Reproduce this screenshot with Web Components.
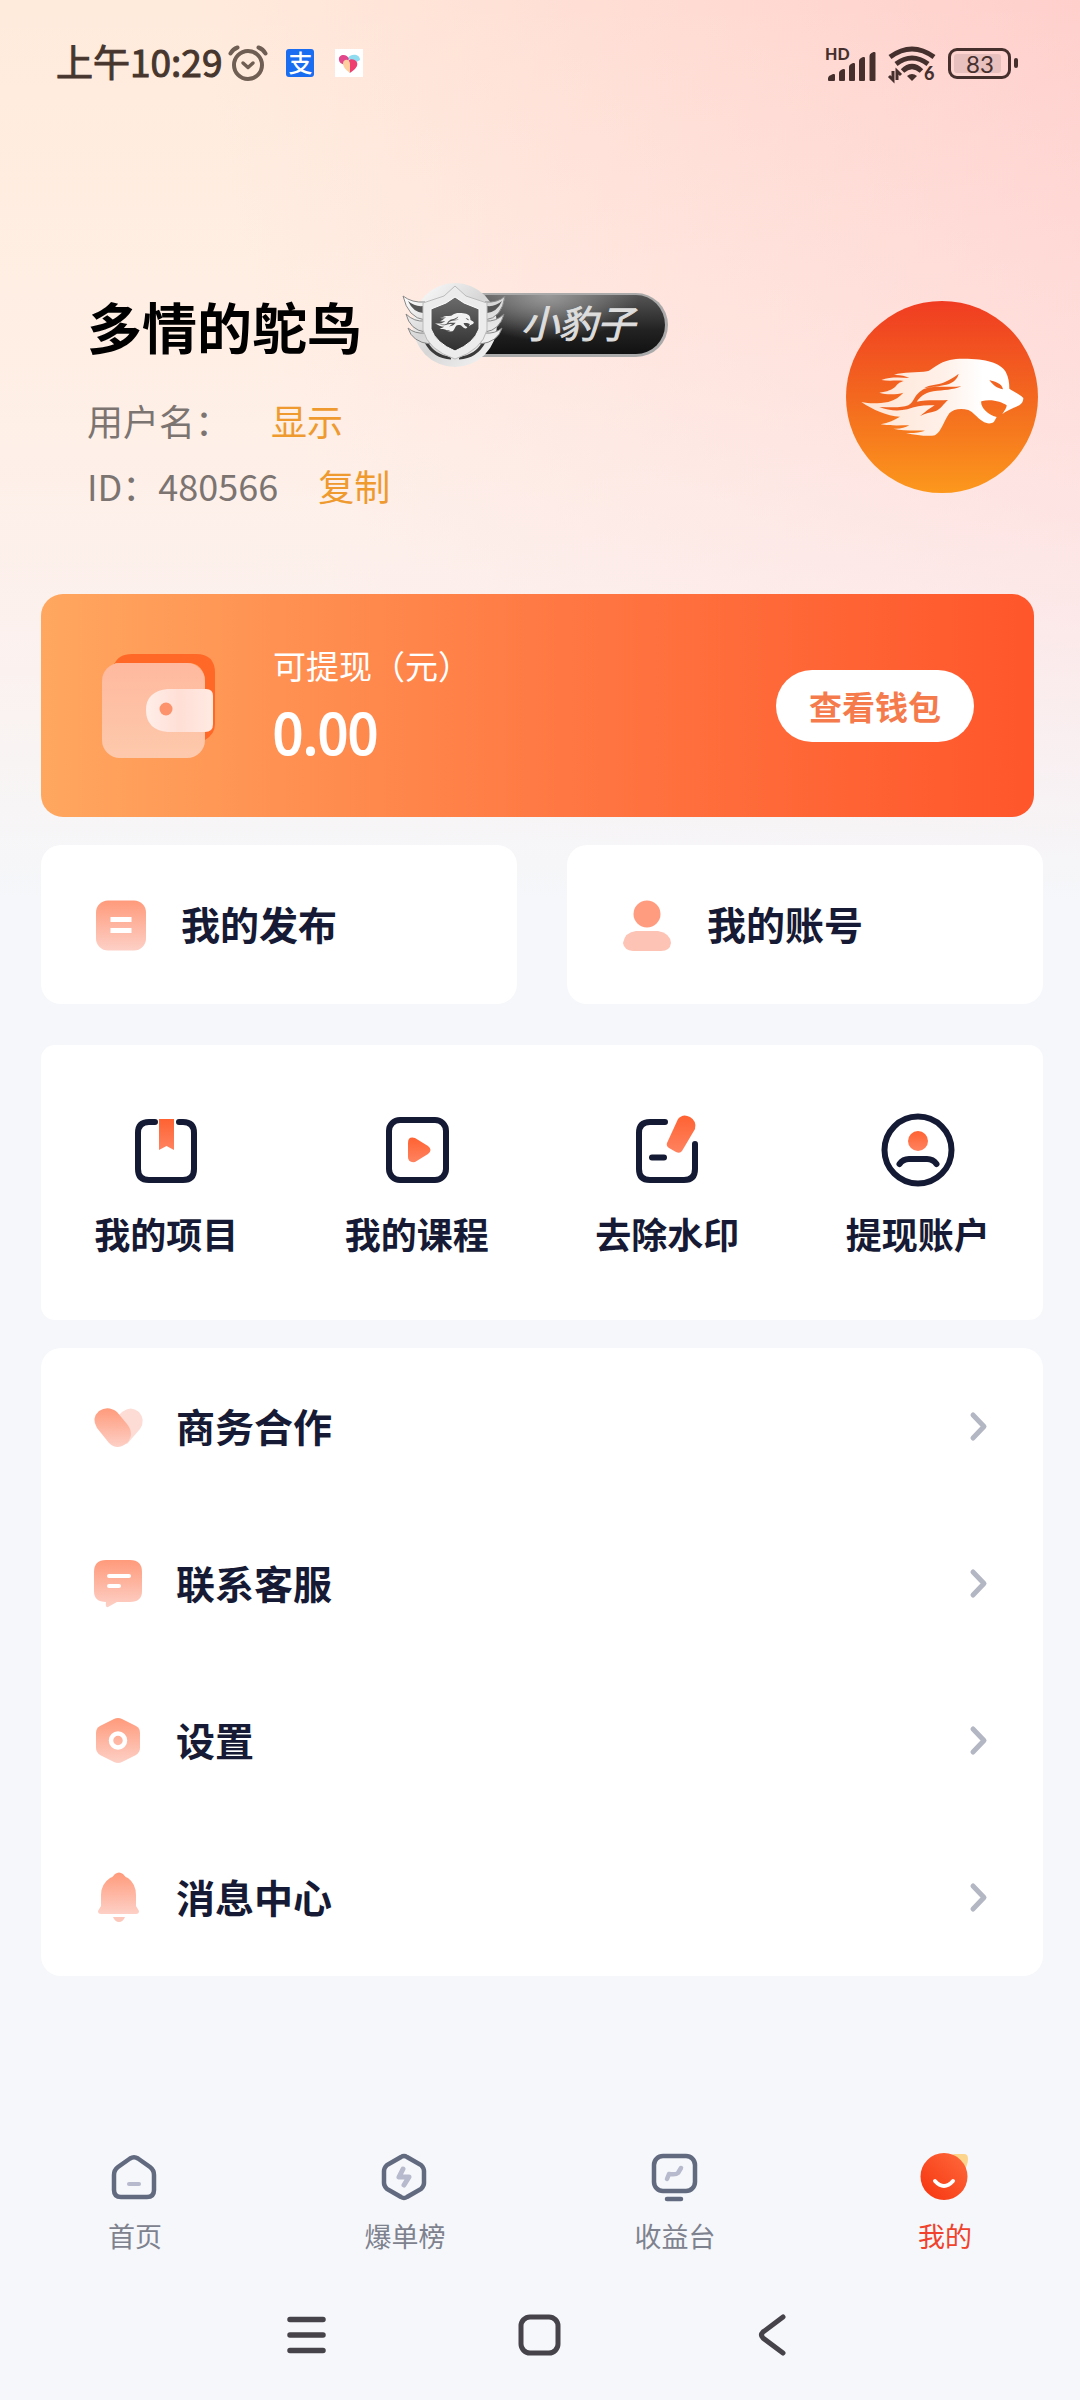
<!DOCTYPE html>
<html lang="zh-CN">
<head>
<meta charset="utf-8">
<meta name="viewport" content="width=device-width, initial-scale=1">
<title>我的</title>
<style>
  body {
    margin: 0;
    background: #f4f7fb;
    font-family: "Noto Sans CJK SC", "Noto Sans", sans-serif;
    color: #161a34;
  }
</style>
</head>
<body>
<profile-page></profile-page>

<script>
const LION = `
  <path d="M325 273C350 260 365 236 430 236C500 236 540 248 557 275C566 292 568 308 568 326C585 338 600 342 610 354C610 364 606 370 598 376C580 384 560 392 547 402C552 395 560 384 560 376C545 366 515 356 484 364C480 378 500 405 530 411L522 425C515 432 500 432 488 424C470 412 460 396 445 390C425 384 400 386 388 400C370 425 365 455 345 466C325 470 290 466 258 459C280 460 300 458 315 452C290 450 250 454 220 446C240 447 255 444 268 436C240 436 210 438 182 433C205 428 225 420 240 410C200 408 160 390 124 366C150 372 180 370 205 366C225 360 240 350 250 338C230 344 200 345 178 338C200 336 220 328 228 318C236 308 242 306 252 303C230 300 205 304 184 300C210 290 240 292 268 294C255 288 240 284 222 285C250 274 290 280 325 273Z" fill="var(--lion, url(#l))"/>
  <path d="M312 325C330 312 350 318 375 306C392 298 405 290 416 281C412 300 395 312 370 316C350 320 330 322 312 325ZM178 381C215 382 245 384 265 376C285 365 280 345 310 328C340 314 380 324 424 319C400 330 370 330 340 334C310 340 300 352 290 365C320 358 350 362 384 360C370 372 362 388 345 394C330 398 318 400 300 408C318 394 330 384 344 376C310 374 290 378 262 388C235 394 205 392 178 381Z" fill="var(--slit, #f16320)"/>
  <path d="M508 300C525 306 545 308 549 328C530 324 520 316 508 300Z" fill="var(--slit, #f16320)"/>`;

const FADE = `<defs><linearGradient id="f" x1="0" y1="0" x2="0" y2="1"><stop offset="0" stop-color="#ff9a7b"/><stop offset="1" stop-color="#fdd0c6"/></linearGradient>
  <linearGradient id="o" x1="0" y1="0" x2="0" y2="1"><stop offset="0" stop-color="#ff6232"/><stop offset="1" stop-color="#ff8360"/></linearGradient></defs>`;

// name -> [viewBox, markup]; every box is drawn at its natural size
const ICONS = {
  alarm: ['0 0 40 36', `<g fill="none" stroke="#6f5e53" stroke-linecap="round"><circle cx="20" cy="20" r="14" stroke-width="4"/><path d="M15 18l5 4.500 5-4.500" stroke-width="3.500" stroke-linejoin="round"/><path d="M2.500 8.500Q5 4 9.500 2.500M37.500 8.500Q35 4 30.500 2.500" stroke-width="4"/></g>`],
  love: ['0 0 28 28', `<rect width="28" height="28" fill="#fff"/><path d="M13 9C16 4 25 5 25 11L18 15Z" fill="#8fdcf0"/><path d="M4 11C3 5 12 4 14 10L10 16C6 15 4 13 4 11Z" fill="#e2478c"/><path d="M13 12C17 8 24 12 22 17C20 21 17 22 15 24L10 16Z" fill="#ee3f70"/><path d="M8 14C9 9 15 10 15 15V24C11 21 8 18 8 14Z" fill="#ffcf9f"/>`],
  signal: ['0 0 52 36', `<g fill="#46302e"><text x="-1" y="15" font-family="Lato, sans-serif" font-weight="900" font-size="16">HD</text><path d="M2 33l1-2 4-2q2-.5 2 1v5q0 1-1 1H3q-1 0-1-1zM13 28q0-2 2-3l2-1q2-.5 2 1v10q0 1-1 1h-4q-1 0-1-1zM23 22q0-2 2-3l2-1q2-.5 2 1v16q0 1-1 1h-4q-1 0-1-1zM33 16q0-2 2-3l2-1q2-.5 2 1v22q0 1-1 1h-4q-1 0-1-1zM43.500 11q0-2 2-3l2-1q2-.5 2 1v27q0 1-1 1h-4q-1 0-1-1z"/></g>`],
  wifi: ['0 0 50 36', `<g fill="none" stroke="#46302e" stroke-width="5"><path d="M2 12Q24-4 46 12M8 19Q24 7 40 19M14.500 26Q24 17 33.500 26"/></g><path d="M19 31q5-4 10 0l-5 5z" fill="#46302e"/><path d="M5 26v9l-4-4M9 35v-9l4 4" fill="none" stroke="#46302e" stroke-width="3"/><text x="36" y="35" fill="#46302e" font-family="Lato, sans-serif" font-weight="900" font-size="18">6</text>`],
  lion: ['78 63 576 576', `<defs><linearGradient id="a" x1="0" y1="0" x2="0" y2="1"><stop offset="0" stop-color="#f03c22"/><stop offset=".5" stop-color="#f3681f"/><stop offset="1" stop-color="#fc981c"/></linearGradient><linearGradient id="l"><stop offset="0" stop-color="#ffe4d4"/><stop offset=".5" stop-color="#fff0e8"/><stop offset=".75" stop-color="#fff"/></linearGradient></defs><circle cx="366" cy="351" r="288" fill="url(#a)"/>${LION}`],
  shield: ['402 283 104 85', `<defs><linearGradient id="s" x1="0" y1="0" x2="1" y2="1"><stop offset="0" stop-color="#fff"/><stop offset=".5" stop-color="#d6d6d6"/><stop offset="1" stop-color="#f8f8f8"/></linearGradient><linearGradient id="d" x1="0" y1="0" x2="0" y2="1"><stop offset="0" stop-color="#6b6b6b"/><stop offset="1" stop-color="#2f2f2f"/></linearGradient></defs>
    <circle cx="455" cy="325" r="42" fill="url(#s)"/>
    <path d="M426 342Q434 357 451 358M484 342Q476 357 459 358" fill="none" stroke="#3a3a3a" stroke-width="3"/>
    <g fill="url(#s)" stroke="#888" stroke-width="1"><path d="M403 296Q412 303 425 302V320Q408 318 403 296ZM406 314Q414 322 425 321V332Q410 330 406 314ZM408 328Q415 334 425 333L430 344Q412 342 408 328ZM505 296Q498 303 485 302V320Q502 318 505 296ZM504 314Q496 322 485 321V332Q500 330 504 314ZM502 328Q495 334 485 333L480 344Q498 342 502 328Z"/></g>
    <path d="M408 301Q415 307 423 306V313Q413 312 408 301ZM502 301Q495 307 487 306V313Q497 312 502 301Z" fill="#555"/>
    <path d="M455 286L466 296L487 303V330Q482 350 455 359Q428 350 423 330V303L444 296Z" fill="#ececec" stroke="#bbb" stroke-width="1"/>
    <path d="M455 297L464 303L479 309V329Q474 343 455 351Q436 343 431 329V309L446 303Z" fill="url(#d)" stroke="#fff" stroke-width="1"/>
    <g style="--lion:#f2f2f2;--slit:#555" transform="translate(425 294) scale(.08)">${LION}</g>`],
  wallet: ['0 0 114 104', `<defs><linearGradient id="w" x1="0" y1="0" x2="0" y2="1"><stop offset="0" stop-color="#ffb99e"/><stop offset="1" stop-color="#fdc9ac"/></linearGradient><linearGradient id="k"><stop offset="0" stop-color="#ffeee8"/><stop offset=".5" stop-color="#ffdfd6"/><stop offset="1" stop-color="#ffeae2"/></linearGradient></defs><path d="M12 11Q16 0 30 0H94Q113 0 113 19V70Q113 80 103 86V24Q100 10 88 9H12Z" fill="#ff6827"/><rect y="9" width="103" height="95" rx="18" fill="url(#w)"/><path d="M66 35H104Q111 35 111 42V70Q111 78 103 78H66Q44 76 44 56Q44 37 66 35Z" fill="url(#k)"/><circle cx="64" cy="55" r="6.500" fill="#fd936c"/>`],
  publish: ['0 0 52 52', `${FADE}<rect x="1" y="1.500" width="50" height="50" rx="12" fill="url(#f)"/><path d="M18 20.500H34M18 31.500H34" stroke="#fff" stroke-width="5" stroke-linecap="square" stroke-linejoin="round"/>`],
  account: ['0 0 52 52', `${FADE}<circle cx="26" cy="15" r="13.500" fill="#ff9c80"/><path d="M15 32H37Q49 34 50 44Q49 52 40 52H12Q3 51 2 44Q4 33 15 32Z" fill="#fdc3b5"/>`],
  project: ['0 0 74 74', `${FADE}<path d="M26 9H20Q9 9 9 20V56Q9 67 20 67H54Q65 67 65 56V20Q65 9 54 9H50" fill="none" stroke="#151a34" stroke-width="6" stroke-linecap="round"/><path d="M30 6H45V37L37.500 33L30 37Z" fill="url(#o)"/>`],
  course: ['0 0 74 74', `${FADE}<rect x="9" y="7" width="57" height="60" rx="11" fill="none" stroke="#151a34" stroke-width="6"/><path d="M28 30Q28 23 35 25L48 33Q53 37 48 41L35 49Q28 50 28 44Z" fill="url(#o)"/>`],
  watermark: ['0 0 74 74', `${FADE}<path d="M35 9H20Q9 9 9 20V56Q9 67 20 67H54Q65 67 65 56V31M22 44.500H34" fill="none" stroke="#151a34" stroke-width="6" stroke-linecap="round"/><path d="M48 6Q53 0 60 4Q67 8 65 16L52 38Q50 41 46 39L39 35Q36 33 37 30Z" fill="url(#o)"/>`],
  payee: ['0 0 74 74', `${FADE}<circle cx="37" cy="37" r="33.500" fill="none" stroke="#151a34" stroke-width="6"/><circle cx="37" cy="28" r="10" fill="url(#o)"/><path d="M18.500 51Q22 46 28 46H46Q52 46 55.500 51" fill="none" stroke="#151a34" stroke-width="6" stroke-linecap="round"/>`],
  heart: ['0 0 52 52', `${FADE}<path d="M14 26L29 11Q38 4 46 11Q53 19 47 28L34 43Z" fill="#fddcd5"/><path d="M4 27Q-2 17 6 10Q15 4 24 11L34 23Q42 33 34 42Q24 50 16 42Z" fill="url(#f)"/>`],
  chat: ['0 0 52 52', `${FADE}<path d="M13 2H37Q49 2 49 14V33Q49 44 37 44H24L15 49Q12 50 13 44Q1 44 1 33V14Q1 2 13 2Z" fill="url(#f)"/><path d="M16 18H36M16 28H26" stroke="#fff" stroke-width="4" stroke-linecap="round"/>`],
  gear: ['0 0 52 52', `${FADE}<path d="M21 4Q25 2 29 4L43 11Q47 13 47 18V33Q47 37 43 40L29 47Q25 49 21 47L7 40Q3 37 3 33V18Q3 13 7 11Z" fill="url(#f)"/><circle cx="25" cy="25.500" r="7" fill="none" stroke="#fff" stroke-width="4.500"/>`],
  bell: ['0 0 52 52', `${FADE}<path d="M22 2Q26-1 30 2Q32 5 35 6Q43 12 43 23V34L46 39Q46 42 43 42H8Q5 42 5 39L8 34V23Q8 12 17 6Q20 5 22 2Z" fill="url(#f)"/><path d="M20 45H32Q30 50 26 50Q22 50 20 45Z" fill="#fdc8bc"/>`],
  chevron: ['0 0 20 32', `<path d="M4 4L15 15.500L4 27" fill="none" stroke="#b3b7c3" stroke-width="5" stroke-linecap="round" stroke-linejoin="round"/>`],
  home: ['0 0 48 48', `<path d="M19 5.500Q23 3 27 5.500L39 14Q43 17 43 22V37Q43 44 36 44H10Q3 44 3 37V22Q3 17 7 14Z" fill="none" stroke="#626a80" stroke-width="4.500"/><path d="M18 31H28" stroke="#b7b9cc" stroke-width="4" stroke-linecap="round"/>`],
  hot: ['0 0 48 48', `<path d="M20 4Q23 2 26 4L40 12Q43 15 43 18V30Q43 33 40 36L26 44Q23 46 20 44L6 36Q3 33 3 30V18Q3 15 6 12Z" fill="none" stroke="#626a80" stroke-width="4.500"/><path d="M22 16L18 24H28L23 32" fill="none" stroke="#b7b9cc" stroke-width="5" stroke-linecap="round" stroke-linejoin="round"/>`],
  income: ['0 0 48 48', `<rect x="3" y="3" width="41" height="35" rx="9" fill="none" stroke="#626a80" stroke-width="4.500"/><path d="M16 26L18 21Q25 22 27 20L30 15" fill="none" stroke="#b7b9cc" stroke-width="4.500" stroke-linecap="round" stroke-linejoin="round"/><path d="M16 46H30" stroke="#626a80" stroke-width="4.500" stroke-linecap="round"/>`],
  mine: ['0 0 48 48', `<defs><linearGradient id="m" x1="1" y1="0" x2="0" y2="1"><stop offset="0" stop-color="#ff6a3d"/><stop offset="1" stop-color="#f6330e"/></linearGradient></defs><path d="M32 1H43Q47 1 47 6Q47 12 42 20Z" fill="#fcd48c"/><circle cx="23" cy="23.500" r="23.500" fill="url(#m)"/><path d="M14 28Q23 38 32 28" fill="none" stroke="#fff" stroke-width="4" stroke-linecap="round"/>`],
  menu: ['0 0 44 44', `<path d="M5 6.500H38M5 22H38M5 37.500H38" stroke="#46444a" stroke-width="5.500" stroke-linecap="round"/>`],
  square: ['0 0 44 44', `<rect x="3" y="4" width="37" height="36" rx="9" fill="none" stroke="#46444a" stroke-width="5"/>`],
  back: ['0 0 44 44', `<path d="M32 4L12 19Q9 22 12 25L32 40" fill="none" stroke="#46444a" stroke-width="5" stroke-linecap="round"/>`],
};

function define(name, html) {
  const template = document.createElement('template');
  template.innerHTML = html;
  customElements.define(name, class extends HTMLElement {
    constructor() {
      super();
      this.attachShadow({ mode: 'open' }).appendChild(template.content.cloneNode(true));
    }
  });
}

class AppIcon extends HTMLElement {
  connectedCallback() {
    if (this.shadowRoot) return;
    const [box, markup] = ICONS[this.getAttribute('name')];
    const [, , w, h] = box.split(' ');
    this.attachShadow({ mode: 'open' }).innerHTML = `
      <style>
        :host { display: block; flex: none; }
        svg { display: block; overflow: visible; width: var(--icon-width, ${w}px); height: var(--icon-height, ${h}px); }
      </style>
      <svg viewBox="${box}" aria-hidden="true">${markup}</svg>`;
  }
}
customElements.define('app-icon', AppIcon);

define('status-bar', `
  <style>
    :host { display: flex; align-items: center; justify-content: space-between; height: 126px; padding: 0 62px 0 56px; color: #46362e; }
    .left, .right { display: flex; align-items: center; }
    time { font-size: 37px; line-height: 48px; padding-bottom: 4px; -webkit-text-stroke: 1px; margin-right: 6px; }
    .pay { width: 28px; height: 28px; border-radius: 3px; margin: 0 21px 0 18px; background: #1a6cf0; color: #fff; font-size: 24px; line-height: 26px; font-weight: 500; text-align: center; }
    .right { gap: 10px; color: #46302e; }
    .battery { display: flex; align-items: center; gap: 3px; }
    .cell { box-sizing: border-box; width: 63px; height: 31px; border: 3px solid #46302e; border-radius: 9px; padding: 3px; }
    .level { display: block; width: 42px; padding-left: 5px; height: 19px; border-radius: 3px; background: #e8c0be; font: 24px/19px Lato, sans-serif; text-align: center; }
    .nub { width: 4px; height: 10px; border-radius: 2px; background: #46302e; }
  </style>
  <div class="left"><time>上午10:29</time><app-icon name="alarm"></app-icon><span class="pay">支</span><app-icon name="love"></app-icon></div>
  <div class="right">
    <app-icon name="signal"></app-icon><app-icon name="wifi"></app-icon>
    <div class="battery"><div class="cell"><span class="level">83</span></div><span class="nub"></span></div>
  </div>
`);

define('level-badge', `
  <style>
    :host { display: flex; align-items: center; position: relative; width: 266px; height: 85px; }
    app-icon { position: absolute; left: 0; top: 0; }
    .pill { box-sizing: border-box; flex: 1; margin-left: 50px; height: 64px; padding-right: 30px; border: 2px solid #aaa; border-width: 2px 3px 3px 0; border-radius: 0 32px 32px 0;
      background: radial-gradient(ellipse at 45% 0, #999, transparent 55%), linear-gradient(#555, #222 60%, #111);
      color: #ddd; font-size: 38px; line-height: 54px; font-style: italic; -webkit-text-stroke: 1px; text-align: right; }
  </style>
  <div class="pill"><slot></slot></div>
  <app-icon name="shield"></app-icon>
`);

define('profile-header', `
  <style>
    :host { display: flex; justify-content: space-between; align-items: flex-start; padding: 157px 5px 75px 46px; }
    .title { display: flex; align-items: center; gap: 40px; height: 84px; margin-bottom: 20px; }
    h1 { margin: 0; font-size: 55px; line-height: 80px; font-weight: 700; color: #000; }
    .line { display: flex; align-items: center; gap: 40px; height: 65px; font-size: 36px; color: #7c7471; }
    button { padding: 0; border: 0; background: none; font: inherit; color: #ee9a2e; }
    .avatar { margin-top: 18px; --icon-width: 192px; --icon-height: 192px; }
  </style>
  <div>
    <div class="title"><h1>多情的鸵鸟</h1><level-badge>小豹子</level-badge></div>
    <div class="line"><span>用户名：</span><button>显示</button></div>
    <div class="line"><span>ID：480566</span><button>复制</button></div>
  </div>
  <app-icon class="avatar" name="lion"></app-icon>
`);

define('wallet-card', `
  <style>
    :host { display: flex; align-items: center; gap: 57px; height: 223px; margin: 2px 9px 0 0; padding: 0 60px 0 61px; border-radius: 22px; background: linear-gradient(90deg, #ffa75f, #ff7843 52%, #ff562b); color: #fff; }
    .sum { flex: 1; padding-bottom: 6px; }
    .label { font-size: 33px; line-height: 56px; }
    .value { font-size: 54px; line-height: 76px; -webkit-text-stroke: 2px; }
    button { height: 72px; padding: 0 33px; border: 0; border-radius: 36px; background: #fff; color: #f57b4d; font: inherit; font-size: 33px; font-weight: 700; }
  </style>
  <app-icon name="wallet"></app-icon>
  <div class="sum"><div class="label">可提现（元）</div><div class="value">0.00</div></div>
  <button>查看钱包</button>
`);

class LinkCard extends HTMLElement {
  connectedCallback() {
    if (this.shadowRoot) return;
    this.attachShadow({ mode: 'open' }).innerHTML = `
      <style>
        :host { display: block; flex: 1; }
        a { display: flex; align-items: center; gap: 34px; height: 159px; padding-left: 54px; border-radius: 20px; background: #fff; color: inherit; text-decoration: none; font-size: 39px; font-weight: 700; }
        span { padding-bottom: 4px; }
      </style>
      <a href="#"><app-icon name="${this.getAttribute('icon')}"></app-icon><span><slot></slot></span></a>`;
  }
}
customElements.define('link-card', LinkCard);

class ToolLink extends HTMLElement {
  connectedCallback() {
    if (this.shadowRoot) return;
    this.attachShadow({ mode: 'open' }).innerHTML = `
      <style>
        :host { display: block; }
        a { display: flex; flex-direction: column; align-items: center; gap: 22px; color: inherit; text-decoration: none; font-size: 36px; line-height: 48px; font-weight: 700; }
      </style>
      <a href="#"><app-icon name="${this.getAttribute('icon')}"></app-icon><span><slot></slot></span></a>`;
  }
}
customElements.define('tool-link', ToolLink);

class MenuRow extends HTMLElement {
  connectedCallback() {
    if (this.shadowRoot) return;
    this.attachShadow({ mode: 'open' }).innerHTML = `
      <style>
        :host { display: block; }
        a { display: flex; align-items: center; gap: 31px; height: 157px; padding: 0 54px 0 52px; color: inherit; text-decoration: none; font-size: 39px; font-weight: 700; }
        span { flex: 1; padding-bottom: 4px; }
      </style>
      <a href="#"><app-icon name="${this.getAttribute('icon')}"></app-icon><span><slot></slot></span><app-icon name="chevron"></app-icon></a>`;
  }
}
customElements.define('menu-row', MenuRow);

class TabLink extends HTMLElement {
  connectedCallback() {
    if (this.shadowRoot) return;
    this.attachShadow({ mode: 'open' }).innerHTML = `
      <style>
        :host { display: block; flex: 1; color: #7e828f; }
        :host([active]) { color: #f0422c; }
        a { display: flex; flex-direction: column; align-items: center; gap: 16px; color: inherit; text-decoration: none; font-size: 27px; line-height: 38px; }
      </style>
      <a href="#"><app-icon name="${this.getAttribute('icon')}"></app-icon><span><slot></slot></span></a>`;
  }
}
customElements.define('tab-link', TabLink);

define('system-nav', `
  <style>
    :host { display: flex; justify-content: center; align-items: center; gap: 189px; height: 131px; }
    button { padding: 0; border: 0; background: none; }
  </style>
  <button aria-label="菜单"><app-icon name="menu"></app-icon></button>
  <button aria-label="桌面"><app-icon name="square"></app-icon></button>
  <button aria-label="返回"><app-icon name="back"></app-icon></button>
`);

define('profile-page', `
  <style>
    :host { display: flex; flex-direction: column; min-height: 100vh;
      background:
        linear-gradient(rgba(255, 247, 247, 0), rgba(255, 247, 247, .3) 340px, rgba(251, 244, 247, .65) 620px, #f5f7fa 900px),
        linear-gradient(78deg, #ffebdc 30%, #ffcfcc) 0 0 / 100% 900px no-repeat,
        #f5f7fa; }
    main { flex: 1; padding: 0 37px 0 41px; }
    .pair { display: flex; gap: 50px; margin: 28px 0 41px; }
    .tools { display: grid; grid-template-columns: repeat(4, 1fr); height: 207px; padding-top: 68px; border-radius: 14px; background: #fff; }
    .menu { margin: 28px 0; border-radius: 20px; background: #fff; }
    .tabs { display: flex; padding-bottom: 14px; }
  </style>
  <status-bar></status-bar>
  <main>
    <profile-header></profile-header>
    <wallet-card></wallet-card>
    <div class="pair">
      <link-card icon="publish">我的发布</link-card>
      <link-card icon="account">我的账号</link-card>
    </div>
    <div class="tools">
      <tool-link icon="project">我的项目</tool-link>
      <tool-link icon="course">我的课程</tool-link>
      <tool-link icon="watermark">去除水印</tool-link>
      <tool-link icon="payee">提现账户</tool-link>
    </div>
    <div class="menu">
      <menu-row icon="heart">商务合作</menu-row>
      <menu-row icon="chat">联系客服</menu-row>
      <menu-row icon="gear">设置</menu-row>
      <menu-row icon="bell">消息中心</menu-row>
    </div>
  </main>
  <nav class="tabs">
    <tab-link icon="home">首页</tab-link>
    <tab-link icon="hot">爆单榜</tab-link>
    <tab-link icon="income">收益台</tab-link>
    <tab-link icon="mine" active>我的</tab-link>
  </nav>
  <system-nav></system-nav>
`);
</script>
</body>
</html>
